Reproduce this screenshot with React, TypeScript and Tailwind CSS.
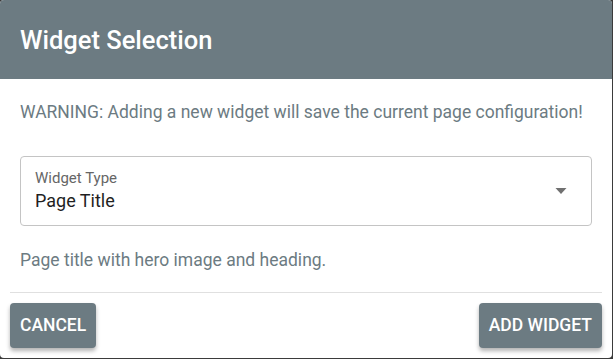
import React from 'react';

const font = { fontFamily: 'Roboto, "Liberation Sans", sans-serif' };

function SelectField({ label, value }: { label: string; value: string }) {
  return (
    <div className="relative h-[70px] rounded-[4px] border border-[#c4c4c4] px-[14px] pt-[12px]">
      <div className="text-[15px] leading-[19px] text-[#666666]">{label}</div>
      <div className="text-[18px] leading-[26px] text-[#1f1f1f]">{value}</div>
      {/* dropdown caret */}
      <svg
        className="absolute right-[24px] top-[31px]"
        width="12"
        height="6"
        viewBox="0 0 12 6"
      >
        <path d="M0.5 0 L11.5 0 L6 6 Z" fill="#707070" />
      </svg>
    </div>
  );
}

export default function App() {
  return (
    <div className="h-[359px] w-[613px] bg-[#3b3b3b]" style={font}>
      <div className="flex h-[358px] w-[612px] flex-col overflow-hidden rounded-[4px] bg-white">
        {/* Header */}
        <div className="flex h-[79px] shrink-0 items-center bg-[#6c7b82] px-5 pt-[2px]">
          <h2 className="text-[25.5px] font-medium leading-none text-white">Widget Selection</h2>
        </div>

        {/* Body */}
        <div className="flex-1 px-5 pt-[21px]">
          <p className="text-[17.5px] leading-[24px] text-[#6c7b82]">
            WARNING: Adding a new widget will save the current page configuration!
          </p>
          <div className="mt-[32px]">
            <SelectField label="Widget Type" value="Page Title" />
          </div>
          <p className="mt-[22px] text-[17.5px] leading-[24px] text-[#6c7b82]">
            Page title with hero image and heading.
          </p>
        </div>

        {/* Footer */}
        <div className="mx-[10px] flex justify-between border-t border-[#e0e0e0] pb-[10px] pt-[10px]">
          <button
            type="button"
            className="h-[45px] rounded-[4px] bg-[#6c7b82] px-[10px] text-[17.5px] font-medium uppercase text-white shadow-[0_3px_4px_rgba(0,0,0,0.3)]"
          >
            Cancel
          </button>
          <button
            type="button"
            className="h-[45px] rounded-[4px] bg-[#6c7b82] px-[10px] text-[17.5px] font-medium uppercase text-white shadow-[0_3px_4px_rgba(0,0,0,0.3)]"
          >
            Add Widget
          </button>
        </div>
      </div>
    </div>
  );
}
